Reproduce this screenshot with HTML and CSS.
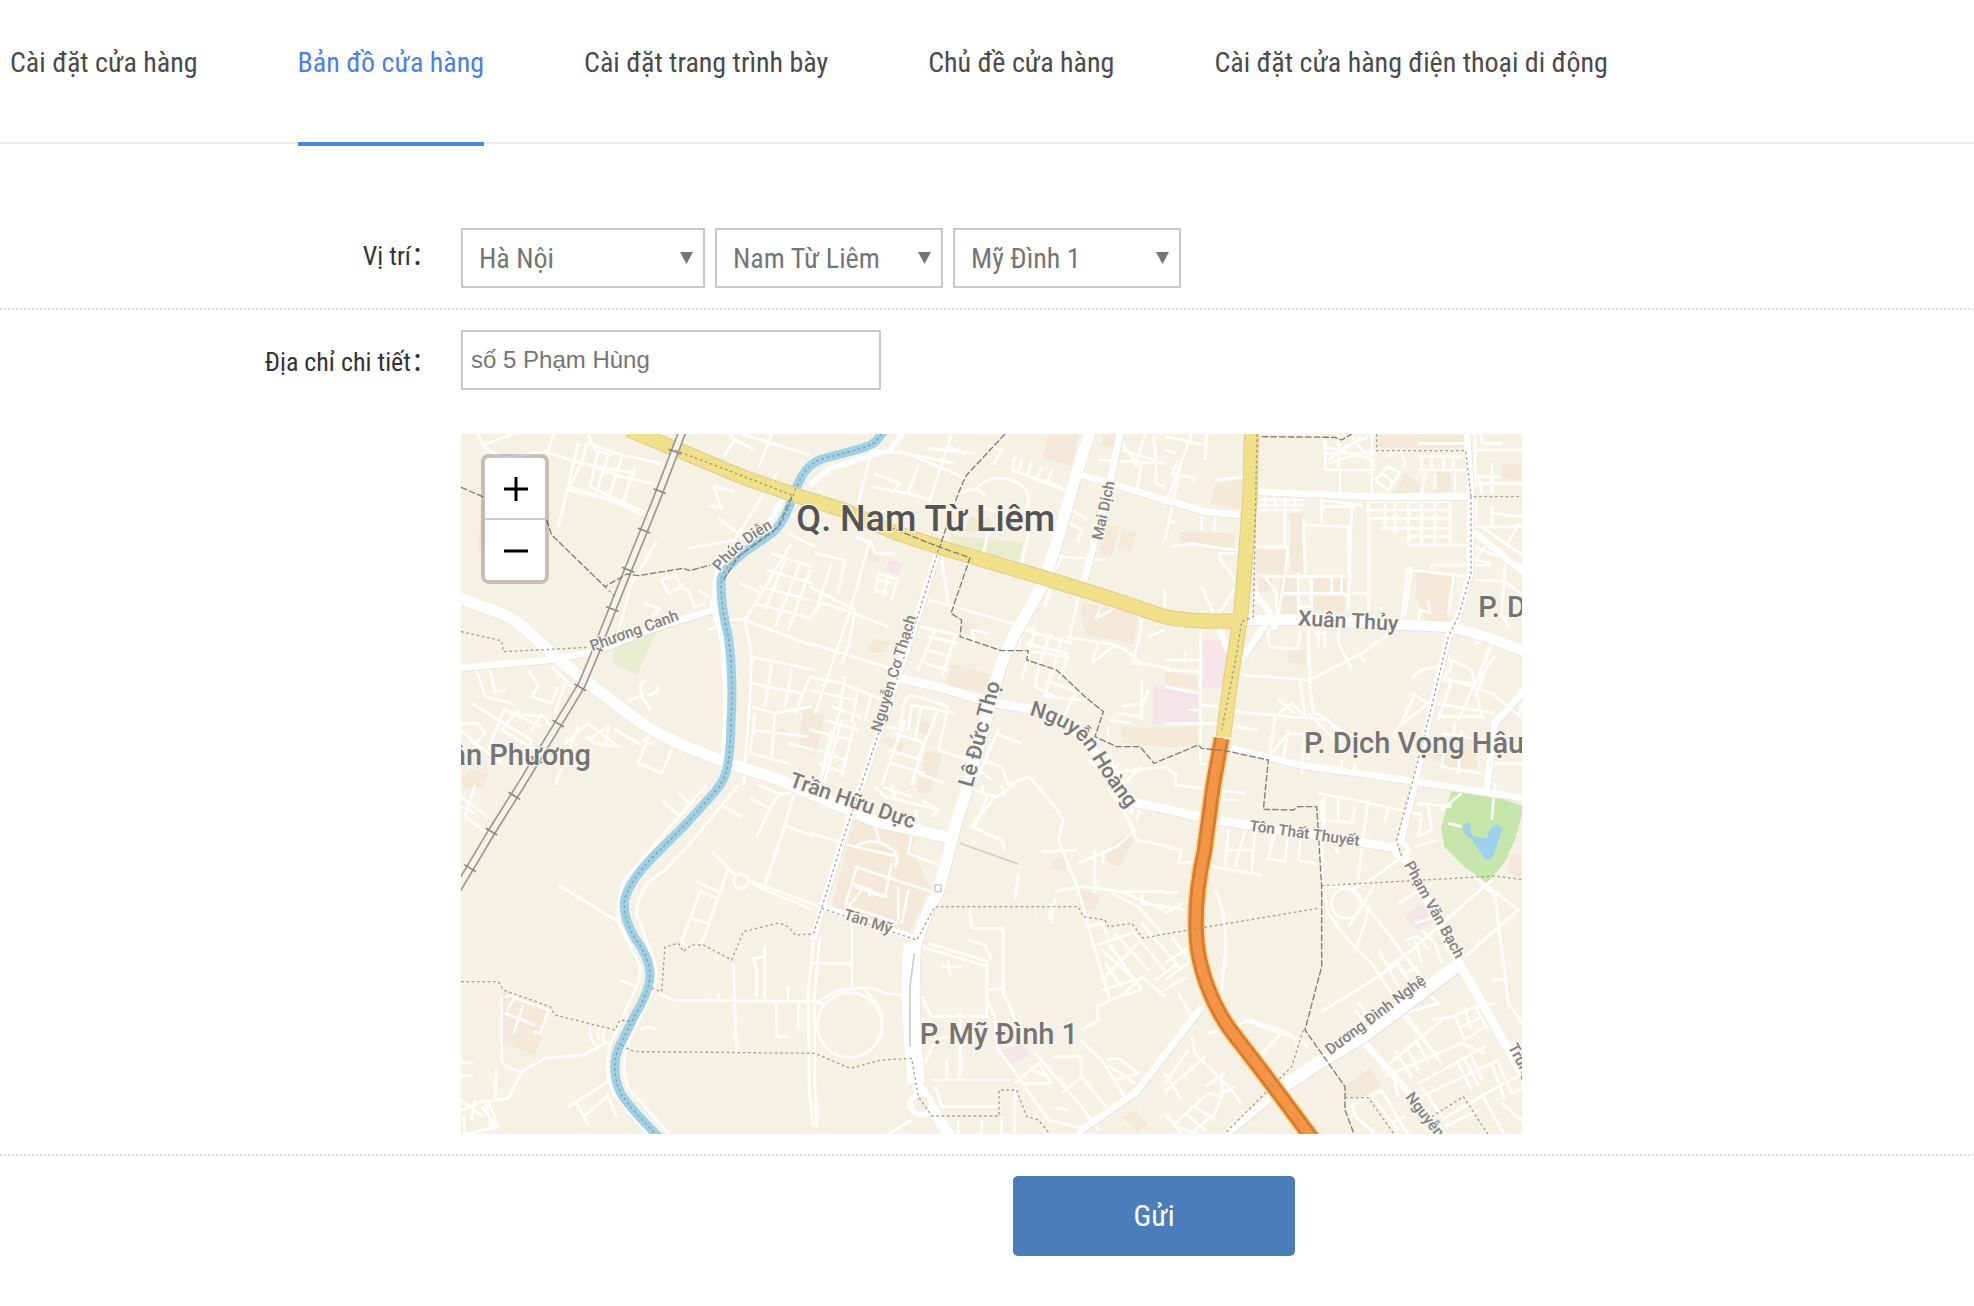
FILE: index.html
```html
<!DOCTYPE html>
<html lang="vi">
<head>
<meta charset="utf-8">
<title>Bản đồ cửa hàng</title>
<link rel="stylesheet" href="styles.css">
</head>
<body>
<nav class="tabs">
  <a class="tab" href="#settings">Cài đặt cửa hàng</a>
  <a class="tab active" href="#map" aria-current="page">Bản đồ cửa hàng</a>
  <a class="tab" href="#layout">Cài đặt trang trình bày</a>
  <a class="tab" href="#theme">Chủ đề cửa hàng</a>
  <a class="tab" href="#mobile">Cài đặt cửa hàng điện thoại di động</a>
</nav>
<form class="form">
  <div class="row">
    <label class="label" for="city">Vị trí：</label>
    <div class="selects">
      <span class="select wide"><select id="city"><option>Hà Nội</option></select></span>
      <span class="select"><select aria-label="Quận"><option>Nam Từ Liêm</option></select></span>
      <span class="select"><select aria-label="Phường"><option>Mỹ Đình 1</option></select></span>
    </div>
  </div>
  <div class="row detail">
    <label class="label" for="address">Địa chỉ chi tiết：</label>
    <div class="field">
      <input class="text" id="address" type="text" placeholder="số 5 Phạm Hùng">
      <div class="map">
<svg viewBox="18 12 3183 2100" role="img" aria-label="Bản đồ Nam Từ Liêm">
  <defs>
    <path id="river" d="M1290 0L1262 34Q1250 48 1180 66L1100 87Q1060 102 1040 140L1020 180Q990 280 950 310L870 365Q800 420 798 450Q796 520 820 620Q836 740 828 880Q826 985 812 1030Q805 1055 780 1085L690 1185L600 1275Q520 1355 508 1415Q505 1465 540 1525Q582 1580 585 1630Q586 1680 540 1755L490 1855Q465 1925 500 1995Q530 2040 620 2130"/>
    <path id="rail" d="M684 0L600 220L515 430L420 670L380 765L195 1070L110 1205L0 1390"/>
    <path id="yellow-a" d="M520 0L660 56L860 140L1020 195L1165 240L1315 305L1455 352L1545 378L1765 443L1965 505L2130 560Q2200 576 2350 573"/>
    <path id="yellow-b" d="M2390 0L2385 200L2374 350L2357 560L2327 750L2305 920"/>
    <path id="orange" d="M2300 925L2275 1065L2248 1265Q2218 1400 2224 1515C2228 1610 2270 1725 2330 1805L2430 1935L2575 2130"/>
    <g id="major">
      <path class="w34" d="M0 500L150 555Q200 580 300 680L400 760L560 880Q640 935 830 1003L960 1045L1265 1175L1490 1225"/>
      <path class="w20" d="M0 715L280 690L420 665L580 600L790 535"/>
      <path class="w34" d="M1907 0L1865 130L1805 340L1765 460L1705 570Q1640 670 1615 790L1540 1065L1505 1175L1450 1385Q1400 1470 1380 1560"/>
      <path class="w52" d="M1372 1540Q1360 1750 1385 1960"/>
      <path class="w34" d="M1385 1960L1490 2130"/>
      <path class="w20" d="M1450 360L1375 600L1325 750L1265 930L1220 1065L1155 1255L1100 1435L1075 1530"/>
      <path class="w26" d="M1335 745L1465 775L1595 815L1745 840Q1860 880 1930 980Q1990 1080 2025 1115L2145 1140L2250 1165L2730 1240L2830 1255"/>
      <path class="w20" d="M1997 0L1965 160L1885 460M1865 130L2130 210L2250 245L2355 255"/>
      <path class="w30" d="M2340 570L2530 570L2970 590Q3050 600 3210 665"/>
      <path class="w20" d="M2405 185L2730 200L3040 200M3035 0L3048 200L3045 430L3010 560L2980 620L2930 830L2880 1060L2835 1245M3055 305L3210 430M2330 955L2530 1005L2850 1050L3210 1105M3210 780L3120 880L3095 1080"/>
      <path class="w26" d="M2830 1255L2860 1300L3010 1595L3210 1945"/>
      <path class="w38" d="M2470 1980L2590 1900L2730 1815L3010 1605"/>
      <path class="w20" d="M2300 2125L2470 1985M2730 1840L2850 1975L2980 2130M2240 1730L2045 1985L1880 2100L1865 2130M1100 1430L1390 1530M2280 570L2330 680M2440 570L2360 690M2400 490L2460 570L2460 600"/>
    </g>
    <path id="label-hoang" d="M1722 855Q1850 890 1897 960Q1950 1055 2024 1145"/>
    <path id="label-dien" d="M795 425Q850 350 970 285"/>
  </defs>
  <rect class="land" x="0" y="0" width="3220" height="2130"/>

  <g class="block">
    <path d="M78 210h25v155h-32zM1045 830l35 10v130l-50-15zM960 905l25-10 15 15-20 15zM20 1040l30-25 50 20-20 40-55-5z"/>
    <path d="M1780 12h90l-20 100-85-30zM1945 12h40v40l-45-5zM1945 280l50 10-25 90-40-10zM2000 300l45 8-20 55-35-12zM1880 515l170 40-15 87-145-30-10-45zM1525 575l42 8-10 35-40-15zM1235 650l35-25 35 15-15 25-45 5zM1490 700l120 35-25 50-115-20zM1390 865l45 18-15 35-40-20zM1290 920l60 20-10 20-60-20zM1415 960l45 15-30 110-45-15zM1240 360l40 20-10 20-30-10zM1065 840l45 15-28 115-17 0z"/>
    <path d="M2770 15h260v40h-260zM3140 102h65v48l-65-5zM2285 160l80-12-8 92-92-20zM2175 305l165 5-5 55-160-25zM2505 253h42v175l-42-5zM2405 360h90v75l-90-5zM2415 440h38v40l-45 8zM2480 435h55v60l-65-5zM2575 440h50v55h-50zM2635 440h40v45l-40 10zM2470 500h55v50h-60zM2575 500h95v45l-95-5zM2850 130l65 55-95 5zM2935 125h50v60h-50zM2885 425l110 15-20 135-60-5-30-60zM2500 660h52v48l-52-12zM2130 725l97 15v35l-97-10zM2130 895l105-5 0 50-105 15zM1998 890l132 5v55l-132-10zM2915 975l50-25 100-45v110h-80z"/>
    <path d="M145 1680l140 55-45 140-95-35z"/>
    <path d="M1200 1160L1390 1215L1370 1255L1425 1370L1365 1505L1130 1430zM1390 1070l40-5-10 30-35-10zM1960 1255l55-45 22 20-45 80-38-20zM1795 1285l40 2-5 35-42-8zM1870 1380l65 15-15 45-45-5zM2000 2060l45-20 35 45-35 20z"/>
    <path d="M2670 1965l75-50 35 50-55 35h-55zM3165 1270l40 10v70l-45-25z"/>
  </g>
  <g class="pink"><path d="M1300 387l42 15-12 32-36-15zM2238 632h60l22 60-10 80h-72zM2095 765h35l100 20v95h-135zM1640 1860l65-20 20 35-60 30zM2850 1460l50-40 40 50-50 35z"/></g>
  <g class="grass"><path d="M475 640l130-35-60 130-70-35zM1500 320l90 5 115 15-15 55-200-45-5-40zM1545 262l60 0 5 50-80-10z"/></g>
  <path class="park" d="M2988 1085l120 10 100 35-25 90-30 70-55 70-70-50-60-60-10-55z"/>
  <path class="lake" d="M3025 1185q15-15 22 0l0 25q15 20 50 12q10-40 30-38q20 5 12 25l-18 50q-15 45-35 25l-35-55q-35-20-26-44z"/>

  <g class="minor">
    <path d="M65 0L85 50L140 85L270 65L380 100L540 130M300 0L275 75M85 45L180 10M370 40L310 290M395 40L380 95L340 180L450 205L565 255M395 40L500 75L620 100M430 60L405 170L530 230M460 75L420 200M500 80L460 210M540 110L500 225M385 100L500 140L590 160M350 170L570 245M400 15L420 60L470 75"/>
    <path d="M810 0L840 30L805 80M840 30L900 60M950 12L910 115M860 12L1000 55L1065 75M970 125L945 160L840 330L700 355M760 225L800 235L775 170L840 185M790 265L850 310M605 335L530 460L480 640M620 450l40-15 20 35-40 20zM670 470l30 10 20 50 30-10M565 520l50 15-25 25M730 480l30 20M520 815l40-20 25 45M560 795l-5-30 20-15M575 795q35 0 35-30"/>
    <path d="M1010 340L870 570L890 680L885 800L865 1065M1000 310L1080 350M950 370L1070 410M935 420L1070 460M915 470L1065 510M900 520L1065 565M1065 420L1000 600M1035 400L960 590M990 390L930 540M870 570L1080 650M855 460L920 490M820 570L880 565M760 600l50-20M890 680L1080 720M950 700L930 830M1010 720L990 830M1065 740L1020 850M890 760L1040 790M890 830L960 850L1070 830M890 900L1060 920M900 850L885 970L1000 1000M960 850L950 980M1000 940L1080 960"/>
    <path d="M105 720L120 785L155 780M65 720L90 800L170 820M220 720L250 770L230 800L290 820L310 770M290 710L360 780M50 820L230 930L190 1065M150 830L100 960M150 840L260 890M160 850L270 860L290 900M190 840L140 900L240 960M260 850L230 900M310 860L260 960M330 760L300 850M20 880L70 880L90 910L60 940M20 900L60 940L140 1000M370 890L300 1065M330 940L400 880L490 950L420 940L390 920M480 900L560 945M400 930L460 890L450 950M580 920L550 1000L620 1030L650 960M560 930L600 945"/>
    <path d="M18 1100L110 1170M30 1160L100 1210M60 1065L30 1160M20 1130L60 1150M755 1065L520 1335Q485 1380 490 1475L555 1605Q560 1640 540 1680L465 1845Q445 1930 475 1990L590 2125M850 1065L710 1235L630 1320Q545 1370 545 1455L600 1595Q612 1640 590 1690L520 1835Q490 1930 525 1980L650 2120M310 1365L490 1475M495 1650L545 1670M620 1110L670 1155M670 1090L710 1125M800 1125L860 1160M885 1105L945 1135L980 1085M945 1135L905 1220M910 1065L980 1095L1020 1080L990 1185L930 1365M985 1185L1080 1220M770 1265L840 1335M820 1315L745 1530Q710 1570 680 1535L735 1385L785 1405M725 1355L790 1385M710 1465L755 1480M885 1352L1080 1425L1180 1465M890 1362L1070 1438"/>
    <circle cx="858" cy="1354" r="22"/>
    <path d="M610 1690L655 1710L1080 1715M835 1600L845 1870M930 1550L930 1705M905 1700L905 1620L895 1585L925 1580M1000 1670V1710M790 1690V1705M965 1715V1820H1000M1030 1715V1795M1075 1530L1060 1680L1062 1980L1075 2090M1095 1520L1078 1700L1080 1960L1085 2090M140 1700V1895Q150 1915 200 1925L270 1885L385 1875L460 1835M200 1925L160 2005L90 2015L110 2090L130 2090L100 2015M125 1915L120 2010M405 1790Q400 1830 425 1845M430 1790V1830M445 1790V1835M460 1955L340 2030L365 2020L400 2085M455 1990L485 2060M460 1995L385 2060M555 1800L580 1790L600 1800M18 1895L55 1900M18 1940L55 1935M18 2010L85 2060M20 2040L90 2010M25 2060L30 2125M60 2010L50 2070M80 2030L130 2095M20 2115L130 2090M150 1750L240 1785M205 1725L175 1810M150 1700l35-5-30 45M170 1700L280 1740L255 1810L235 1805"/>
    <path d="M1340 70L1250 60L1205 240M1330 60L1475 120L1530 145M1325 65L1500 100M1490 12L1425 210L1355 190L1250 170M1420 55L1560 70M1390 105L1360 190M1255 130L1335 160L1310 190M1475 45L1530 75M1600 45L1640 60L1615 105M1560 180Q1610 120 1690 160Q1740 190 1710 250M1520 190Q1570 160 1590 200M1680 80L1670 120L1815 170M1700 90L1690 130M1730 95L1715 140M1760 110L1745 150M1790 120L1775 165M1720 140L1830 180M1850 190L1780 430M1565 230L1730 270M1600 305L1585 370M1730 270L1700 400"/>
    <path d="M1990 20L2050 110M1930 90L2130 100M2070 12L2040 110M2095 20Q2110 90 2100 160L2130 170M2060 100L2045 180M2000 60L2100 90M1830 270L1880 300L1870 335M1850 240L1900 270M1950 390L1820 380L1800 420M1870 500L1840 640M1930 560L1970 540M1950 500L1920 570M1790 460L1770 530"/>
    <path d="M1245 330L1180 560L1080 850M1200 320L1250 340L1260 370L1320 370M1080 370L1170 390L1150 490M1130 400L1080 550M1065 470L1200 540L1180 650L1160 700M1270 430L1330 450M1270 450L1310 460M1260 480L1300 490M1270 430L1260 490M1300 430L1285 500M1330 440L1310 510M1065 640L1290 710L1350 735M1065 560L1100 520L1170 540L1300 590M1460 390L1480 520M1420 510L1500 530L1740 600M1440 600L1390 720M1500 620L1460 740M1420 620L1510 640M1420 660L1490 680M1410 700L1480 720M1395 590L1530 620M1560 640L1550 600L1600 610M1740 600L1700 750M1780 620L1740 750M1820 620L1790 740M1710 600L1850 640M1710 640L1840 670M1700 610L1690 660L1840 680L1810 750M1740 610L1720 650M1790 610L1770 650M1830 620L1980 645L1910 700M1750 720L1740 770L1800 800M1790 720L1770 800L1880 810M1770 750L1880 790M1860 790L1820 870M1980 645L2010 660L2060 700L2145 715M1930 640L1910 700"/>
    <path d="M1065 740L1160 760L1310 820M1065 780L1200 810M1170 740L1150 860L1100 1040M1210 770L1190 880M1250 790L1230 870M1130 830L1220 860M1110 870L1210 900M1090 960L1170 990M1130 900L1090 1080M1160 870L1110 1050M1200 880L1160 1040M1090 1000L1170 1030M1065 900L1190 930M1335 890L1350 810Q1360 790 1390 800L1480 830M1360 900L1370 825L1500 850M1400 830L1380 930M1450 840L1400 960L1370 1065M1320 910L1410 940L1400 970M1290 890L1350 900M1480 830L1450 960L1540 990M1390 1030L1470 1060M1300 960L1400 990M1310 1000L1410 1030M1350 870L1280 1065M1620 910L1700 940M1630 900L1560 1060M1580 990L1640 1010L1660 1065L1720 1040L1750 1070M1550 1000L1610 1050"/>
    <path d="M2060 570L2055 610L2035 700L2060 700M2060 750V870M2080 780L2060 830M2000 830L2065 820M1990 850L2060 860M1960 870L2030 880M1960 890L1960 930M2130 600L2080 620M2237 600V1000L2300 1010M2130 690H2235M2190 670V700M2130 720L2235 725M2130 770L2235 790M2200 840H2235M2130 880H2300M2237 825L2290 830M1900 990L1950 1030L2130 1010M1990 1000L1960 1070M2060 1010L2000 1065M1950 960L2000 1060M2130 1010L2165 1035L2160 1065L2245 1075"/>
    <path d="M2210 12L2130 230M2130 20L2250 45M2255 12L2250 90M2170 90L2150 130L2220 145L2215 160M2170 140L2130 330M2130 60L2160 70M2150 350L2210 340L2300 355L2350 360M2140 270L2160 280M2280 150L2370 140M2240 260V300M2280 260V300M2290 370L2350 370M2290 380L2350 460L2285 560M2240 470L2280 560M2130 480V545"/>
    <path d="M2610 30V120H2760M2610 50L2760 90M2610 70H2760M2620 100L2750 60M2650 30V120M2690 20L2760 110M2650 60L2740 20M2720 20L2620 90M2750 12V190M2655 120V190M2760 150L2800 110L2835 130L2800 180L2760 150M2780 130L2820 160M2790 80L2840 60L2850 110M2900 80V120M2930 80V120M2965 80V115M2995 80V115M2890 80H3020M2890 120H3030M2890 40H3030M3060 12V170M3060 60H3210M3080 12V40H3140M3060 140H3140M3060 160H3210M3080 190L3070 140M3110 100V190M2910 130L2900 190M2940 130V180M3000 130V190"/>
    <path d="M2405 210H2550M2405 225H2550M2405 240H2540M2430 200V240M2460 200V240M2490 200V350M2520 200V240M2600 200V280M2600 230H2700M2600 210L2720 225M2550 285L2680 290V430M2545 260L2550 430M2740 210L2740 540M2690 230L2680 540M2740 215H2990M2740 240H2990M2740 265H2990M2780 295H2990M2860 320H2990M2860 345H3035M2790 210V300M2820 210V310M2860 210V340M2900 210V340M2940 210V340M2985 210V340M2400 350H2500L2490 430M2420 440H2670M2430 440L2465 490L2465 560M2480 490H2670M2490 430L2470 560M2530 430V550M2570 440V560M2630 440V490M2660 440V490L2680 500M2690 490H2740M2530 530H2570M2860 410L2840 565M2860 420L3050 440M2930 420V405H3110M2995 440L2980 550M2890 570L2895 540L2925 550L2920 510M2780 530V560M2870 410L2850 560"/>
    <path d="M2440 590V640Q2440 660 2530 655L2535 600M2560 590L2565 760L2575 850L2610 860M2590 600V650M2610 610V655M2580 610H2615M2650 590L2650 640L2690 715M2565 750L2720 670L2800 610M2710 670L2730 695M2360 735L2560 750M2535 755L2550 860M2340 845L2620 870L2660 930M2340 890L2410 900M2460 860L2440 1000M2470 850L2510 820L2550 860M2470 810L2520 850M2440 980L2500 910L2570 915L2560 990M2500 900L2480 1010M2550 900L2540 1030M2560 850L2640 930M2590 850L2680 920M2650 900L2700 950M2700 1000V1040M2660 990V1030"/>
    <path d="M3060 210V280M3110 230V290H3210M3110 250L3210 260M3060 290H3210M3080 290L3210 380M3060 350L3180 400L3210 410M3110 400L3060 390L3090 350M3060 450L3150 455L3210 500M3150 400L3140 550L3160 590M3210 550L3150 560M3190 280L3160 340M2980 670L2990 710L2960 750L3060 760L3120 680M2990 690L3050 720L3080 860M2960 740L3110 790L3210 870M2940 820L3120 850M2990 750L2950 870M3060 640L3120 620L3060 760L3010 870M2870 745L2900 720L2950 710M2870 790L2920 820L2820 900M2880 790L2840 880L2810 920M3000 880L2990 960M2960 910L3090 930M3100 700L3060 800M3210 800L3190 860M2960 860H3090M3140 910L3100 1000H3210M3130 960L3210 970M2970 950L2960 1010L3080 1030M3020 900L3010 1030"/>
    <path d="M1065 1210L1200 1250L1330 1280M1260 1190L1275 1240M1200 1250Q1250 1220 1300 1250Q1340 1270 1320 1310M1200 1310L1430 1385M1205 1310L1170 1430M1190 1360L1250 1380L1240 1400M1200 1370L1300 1400M1220 1380L1180 1430L1240 1450M1310 1300L1290 1400L1250 1390M1330 1370L1330 1470M1360 1380L1340 1480M1370 1210L1360 1270L1450 1305M1240 1450L1330 1480M1260 1070L1290 1100L1450 1140M1280 1070L1370 1100M1310 1065L1320 1100M1380 1140L1400 1200M1400 1110L1450 1140L1430 1160"/>
    <path d="M1190 1480V1670M1065 1600H1190M1080 1720L1140 1685Q1250 1660 1290 1690L1350 1695M1075 1720H1110"/>
    <circle cx="1184" cy="1785" r="97"/>
    <path d="M1230 1680Q1290 1740 1280 1790M1400 1550L1600 1610M1420 1540L1600 1595M1480 1590L1485 1640M1460 1610H1520M1540 1530L1590 1545L1610 1590M1545 1440L1550 1495H1645V1690L1680 1765L1720 1820M1595 1600V1760L1430 1760L1400 1700M1600 1680L1640 1675M1600 1720L1620 1760L1625 1850L1780 2070L1880 2095M1515 1745V1950M1475 1890V1950M1430 1950H1665M1440 1970L1460 2030H1640M1410 1900L1440 1830L1500 1815M1640 2060V2130M1680 1980V2130M1510 2070V2130M1580 2070V2130M1270 2130L1370 2070M1740 1870L1880 2030L1930 2100M1795 1880H1875L1880 1940L1820 1990M1680 1960L1750 1900L1790 1960M1700 1960H1790M1730 1920L1780 1940M1880 1940L1965 2045M1805 1940L1840 1980M1800 2035L1840 2040M1875 1830L1940 1890L2010 2000M1955 1890L1990 1885L2050 1930L1980 1950M1960 1905L2040 1960"/>
    <path d="M1745 1065L1800 1130L1825 1170L1810 1230L1870 1380L1920 1560L1965 1710L1925 1730L1930 1770L1880 1800M1760 1265L1865 1260M1870 1300L1985 1250L2040 1200L2010 1150L1960 1075M1920 1260V1390M1945 1260V1300M1990 1100L2045 1230L2145 1250M2060 1110L2045 1170M2025 1150L2045 1110M1800 1385L1880 1370L2000 1385L2130 1385M2000 1385L2130 1440M1970 1390L2050 1430L2130 1520M2060 1390V1420L2130 1430M1745 1465V1460M1785 1420V1470M1800 1405L1790 1480M1690 1330L1680 1410M1545 1075L1620 1100L1550 1190L1640 1230L1650 1260M1580 1065L1590 1100M1600 1090L1560 1190M1640 1065L1650 1100M1610 1110L1680 1065M1590 1210L1610 1220"/>
    <path d="M1890 1490L1940 1480L1960 1520M1910 1550L2030 1510M1940 1560L2040 1650M1980 1510L2080 1620M2030 1500L2130 1620M1960 1540L2060 1680M1940 1680L2070 1640M1960 1710L2060 1680M1950 1640L2060 1530M2000 1700L2060 1640L2130 1700M2060 1480L2180 1620M2100 1650L2170 1600M2110 1690L2200 1640M1950 1600L2000 1670"/>
    <path d="M2280 1380Q2320 1460 2310 1570L2300 1690M2270 1310L2420 1335M2320 1200L2310 1310M2370 1200L2340 1310M2400 1200L2390 1330M2310 1260H2390M2130 1250L2180 1260L2170 1300L2220 1295M2290 1110H2350M2290 1080L2370 1090M2130 1390L2170 1385M2130 1430L2190 1440M2130 1450L2180 1420M2130 1600L2220 1540M2150 1520L2240 1640M2130 1650L2210 1590M2170 1690L2210 1760M2260 1810L2390 1770L2490 1805L2560 1850M2480 1810L2390 1900M2370 1770L2530 1830L2520 1840M2210 1820L2220 1870L2330 1980L2360 2020M2130 1930L2180 2010M2200 1860L2130 1960M2130 1985L2250 1880"/>
    <path d="M2160 2080L2260 1990L2300 2000L2280 2050L2210 2110M2170 2090L2240 2120M2190 2050L2250 2100M2220 2030L2280 2070M2300 1990L2340 1970M2130 2050L2180 2110M2300 1930V1990M2250 1970L2310 1930"/>
    <path d="M2590 1090L2700 1110L2900 1155M2610 1100L2600 1330L2620 1450Q2680 1540 2750 1600L2850 1750L2960 1900M2600 1110V1170L2700 1180M2650 1100V1170M2740 1110L2720 1250L2710 1350M2700 1130L2690 1180M2800 1130L2790 1170M2460 1200L2440 1285L2490 1295L2500 1200M2540 1200L2530 1290L2580 1300M2590 1210V1260M2640 1250L2650 1270M2690 1380Q2750 1350 2800 1310L2850 1280M2620 1370Q2630 1350 2690 1380L2760 1460L2920 1670M2830 1420L2930 1360M2740 1430L2730 1480L2700 1560M2600 1370H2680"/>
    <circle cx="2674" cy="1420" r="45"/>
    <path d="M2760 1360Q2740 1400 2680 1490M2600 1745L2770 1640L2870 1560L3110 1350M3100 1370L3190 1440L3030 1580M3060 1340L3120 1400L3140 1560L3160 1720L3210 1790M3190 1440L3060 1550M2770 1560L2830 1670M2800 1610L2870 1560M2850 1530L2890 1520L2920 1560M2880 1530L2900 1600M2830 1610L2860 1650M2800 1620L2830 1600L2850 1630L2890 1610M2900 1500L2940 1540L2960 1600M2700 1740L2730 1780M2710 1715L2740 1760M2820 1730L2940 1870M2850 1750L2950 1720L2900 1670M2930 1770L2990 1760L3060 1730L3120 1720M3000 1760L3030 1830L3090 1790M3030 1740L3050 1800M3020 1790L3080 1760M3060 1730L3100 1800M3110 1650L3160 1645M2880 1480L2940 1460"/>
    <path d="M2780 1920L2900 1820L2960 1770M2790 1940L3020 1840L3090 1870M2820 1860L2870 1940M2850 1845L2890 1920M2880 1825L2920 1900M2810 1920L2830 2000M2890 1960L3090 1850M2900 2000L3130 1890M3010 1900L3050 1980M3030 1890L3070 1965M3050 1880L3080 1950M2900 1970L2960 2060M3130 1900L3170 1990L3210 1970M3110 1900L3150 2010M2960 2070L3110 1980L3210 1930M2970 2090L3070 2040M3080 1990L3150 2120M2690 2010L2700 2060L2760 2110M2680 2030L2780 1980L2820 2050L2870 2130M2850 2060L2800 2080M3140 2020L3210 2080M2750 2000L2830 2100M2960 1140L3020 1090M2880 1250L2950 1230M2900 1160L2890 1220L2930 1200L2920 1130M2890 1120L2990 1130M2980 1180L3020 1190M3120 1060L3110 1170"/>
  </g>

  <use href="#major" class="casing"/>
  <use href="#major" class="road"/>
  <path class="bank" d="M980 210L920 320L785 425L775 530L805 640L815 830L805 980M1065 165L1125 115L1305 60L1350 0"/>
  <g class="roundabout"><circle cx="1398" cy="2022" r="32"/><circle cx="2838" cy="1260" r="20"/></g>
  <path class="median" d="M1515 1240L1690 1302M1378 1570L1365 1670L1365 1850M1440 1385h18v-20h-18z"/>

  <use href="#river" class="river"/>
  <use href="#yellow-a" class="yellow-case"/><use href="#yellow-b" class="yellow-case"/>
  <use href="#yellow-a" class="yellow"/><use href="#yellow-b" class="yellow"/>
  <use href="#orange" class="orange-glow"/><use href="#orange" class="orange-case"/><use href="#orange" class="orange"/>
  <use href="#rail" class="rail"/><use href="#rail" class="rail-gap"/><use href="#rail" class="rail-ties"/>

  <g class="border-dot">
    <use href="#river"/>
    <path d="M18 605L140 632L145 665L400 652M450 470L480 500M660 60L1010 195M18 1655H130L145 1680L285 1730L300 1755L480 1800L495 1770L530 1775M500 1845Q530 1868 570 1865L1080 1870L1185 1915L1280 1890L1370 1885L1390 2000L1430 2058H1632V1980H1685L1715 2060L1750 2070L1800 2130M590 1675L620 1685L630 1550L670 1540L685 1565L710 1545L745 1545L830 1590L865 1505L965 1480Q1000 1480 1020 1515L1075 1512L1100 1435L1385 1530L1440 1430H1870L1885 1460L1950 1470L1960 1490L2030 1480L2065 1525L2130 1512L2590 1435"/>
    <path d="M1450 360L1375 600L1155 1255L1100 1435M2406 12L2395 560L2360 575L2340 700L2300 900M2765 12V62H3032L3048 200H3210M3048 200V430L3010 560L2980 620L2930 830L2870 1065L2825 1230L2840 1280M2600 1367L2820 1355L3120 1338L3210 1350M2545 1800L2510 1910L2300 2120M2670 2003H2740L2830 2130M2930 2060L3025 2000L3110 2130"/>
  </g>
  <g class="border-dash">
    <path d="M18 172L90 203M275 270L290 315L450 470L515 432L550 437L685 415L705 422L765 405M1010 200L970 290L850 380L805 450"/>
    <path d="M1650 12L1535 135Q1505 190 1455 350M1300 290L1455 352L1545 383L1488 550L1520 570L1515 620L1640 662H1720L1715 690L1805 720L1890 800L1945 845L1920 920L1985 950H2055L2097 1000L2230 945L2240 955L2310 962L2440 990L2425 1138L2515 1140L2530 1130L2585 1130L2600 1370V1610L2550 1800L2670 1970L2670 2040L2700 2120M2420 20L2640 22L2660 30L2690 12"/>
  </g>

  <g class="place">
    <text class="district" x="1024" y="303">Q. Nam Từ Liêm</text>
    <text x="-14" y="1005">ân Phương</text>
    <text x="3070" y="562">P. Dịch Vọng</text>
    <text x="2547" y="968">P. Dịch Vọng Hậu</text>
    <text x="1394" y="1841">P. Mỹ Đình 1</text>
  </g>
  <g class="street big">
    <text transform="translate(2528 586) rotate(3)">Xuân Thủy</text>
    <text transform="translate(1552 1074) rotate(-75)">Lê Đức Thọ</text>
    <text transform="translate(1000 1068) rotate(19)">Trần Hữu Dực</text>
    <text><textPath href="#label-hoang">Nguyễn Hoàng</textPath></text>
  </g>
  <g class="street">
    <text transform="translate(1942 332) rotate(-78)">Mai Dịch</text>
    <text transform="translate(1277 908) rotate(-73)">Nguyễn Cơ Thạch</text>
    <text transform="translate(1163 1466) rotate(18)">Tân Mỹ</text>
    <text transform="translate(412 664) rotate(-20)">Phương Canh</text>
    <text><textPath href="#label-dien">Phúc Diễn</textPath></text>
    <text transform="translate(2382 1202) rotate(8)">Tôn Thất Thuyết</text>
    <text transform="translate(2846 1304) rotate(61)">Phạm Văn Bạch</text>
    <text transform="translate(2626 1876) rotate(-37)">Dương Đình Nghệ</text>
    <text transform="translate(3158 1850) rotate(62)">Trung Kính</text>
    <text transform="translate(2850 2002) rotate(52)">Nguyễn Chánh</text>
  </g>
</svg>
        <div class="zoom">
          <button type="button" aria-label="Phóng to"><svg viewBox="0 0 24 24"><path d="M0 12h24M12 0v24"/></svg></button>
          <button type="button" aria-label="Thu nhỏ"><svg viewBox="0 0 24 24"><path d="M0 12h24"/></svg></button>
        </div>
      </div>
    </div>
  </div>
  <div class="actions"><button class="submit" type="submit">Gửi</button></div>
</form>
</body>
</html>
```
FILE: styles.css
```css
* { box-sizing: border-box; }
body {
  margin: 0;
  background: #fff;
  color: #333;
  font-family: "Roboto Condensed", Roboto, "Noto Sans CJK SC", sans-serif;
  font-size: 28px;
}
.tabs {
  display: flex;
  gap: 100px;
  height: 144px;
  padding-left: 10px;
  border-bottom: 2px solid #ececec;
}
.tab {
  height: 146px;
  padding-top: 43px;
  line-height: 40px;
  color: #4a4a4a;
  text-decoration: none;
  white-space: nowrap;
}
.tab.active { color: #4a80e8; border-bottom: 4px solid #4285f4; }
.form { padding-top: 64px; }
.row {
  display: grid;
  grid-template-columns: 437px minmax(0, 1fr);
  column-gap: 24px;
  padding: 20px 0;
  border-bottom: 2px dotted #e0e0e0;
}
.label {
  padding-top: 8px;
  font-size: 26px;
  line-height: 40px;
  text-align: right;
  white-space: nowrap;
}
.detail .label { padding-top: 12px; }
.selects { display: flex; gap: 10px; }
.select { position: relative; width: 228px; height: 60px; }
.select.wide { width: 244px; }
.select::after {
  content: "";
  position: absolute;
  right: 12px;
  top: 24px;
  width: 13px;
  height: 12px;
  background: #757575;
  clip-path: polygon(0 0, 100% 0, 50% 100%);
  pointer-events: none;
}
.select select, .text {
  width: 100%;
  height: 60px;
  border: 2px solid #c8c8c8;
  border-radius: 0;
  background: #fff;
  color: #757575;
  font: inherit;
}
.select select { appearance: none; padding: 0 16px; }
.field { display: grid; row-gap: 44px; }
.text {
  max-width: 420px;
  padding: 0 8px;
  font-family: "Liberation Sans", Arial, sans-serif;
  font-size: 24px;
}
.text::placeholder { color: #757575; opacity: 1; }
.map { position: relative; width: 100%; max-width: 1061px; }
.map > svg { display: block; width: 100%; height: auto; font-family: Roboto, sans-serif; }
.zoom {
  position: absolute;
  left: 20px;
  top: 20px;
  width: 68px;
  border: 4px solid rgba(0, 0, 0, .2);
  border-radius: 8px;
  background: #fff;
  background-clip: padding-box;
}
.zoom button {
  display: grid;
  place-items: center;
  width: 60px;
  height: 60px;
  padding: 2px 0 0 2px;
  border: 0;
  background: none;
}
.zoom button:first-child { height: 62px; border-bottom: 2px solid #ccc; }
.zoom svg { width: 24px; height: 24px; fill: none; stroke: #000; stroke-width: 3; }
.actions { padding: 20px 0 48px 334px; text-align: center; }
.submit {
  width: 282px;
  height: 80px;
  padding: 0 0 2px;
  border: 0;
  border-radius: 5px;
  background: #4a7ebb;
  color: #fff;
  font: inherit;
  font-size: 30px;
}

/* map drawing */
.land { fill: #f5f1e5; }
.block { fill: #f4e8d8; }
.pink { fill: #f5e4e8; }
.grass { fill: #e8edd0; }
.park { fill: #c6e5ab; }
.lake { fill: #9dd1ec; }
.minor, .casing, .road, .bank, .river, .yellow, .yellow-case, .orange, .orange-case, .orange-glow, .rail, .rail-gap, .rail-ties, .border-dot, .border-dash, .median { fill: none; stroke-linejoin: round; }
.minor { stroke: #fffefb; stroke-width: 8; }
.w20 { stroke-width: 20px; }
.w26 { stroke-width: 26px; }
.w30 { stroke-width: 30px; }
.w34 { stroke-width: 34px; }
.w38 { stroke-width: 38px; }
.w52 { stroke-width: 52px; }
.casing { stroke: #e8e5dc; transform: translate(2px, 3px); }
.road { stroke: #fff; }
.bank { stroke: #fff; stroke-width: 16; }
.roundabout { fill: #f2efe4; stroke: #fff; stroke-width: 16; }
.median { stroke: #cfcec8; stroke-width: 5; }
.river { stroke: #9dd1e8; stroke-width: 27; }
.yellow-case { stroke: #e8c888; stroke-width: 46; }
.yellow { stroke: #f0e088; stroke-width: 40; }
.orange-glow { stroke: #f2dc98; stroke-width: 56; }
.orange-case { stroke: #dc7a30; stroke-width: 46; }
.orange { stroke: #f29646; stroke-width: 28; }
.rail { stroke: #9a9890; stroke-width: 26; }
.rail-gap { stroke: #f5f3ec; stroke-width: 16; }
.rail-ties { stroke: #8a8880; stroke-width: 40; stroke-dasharray: 5 122; stroke-dashoffset: 60; }
.border-dot { stroke: #8c8c88; stroke-width: 4; stroke-dasharray: 8 8; opacity: .8; }
.border-dash { stroke: #7c7c78; stroke-width: 4; stroke-dasharray: 20 6; }
.place text, .street text { paint-order: stroke; stroke: #f8f5ec; stroke-width: 8px; stroke-linejoin: round; }
.place { font-size: 87px; font-weight: 500; fill: #747474; }
.place .district { font-size: 108px; fill: #545454; }
.street { font-size: 46px; font-weight: 500; fill: #828282; }
.street.big { font-size: 64px; fill: #7a7a7a; }
```
